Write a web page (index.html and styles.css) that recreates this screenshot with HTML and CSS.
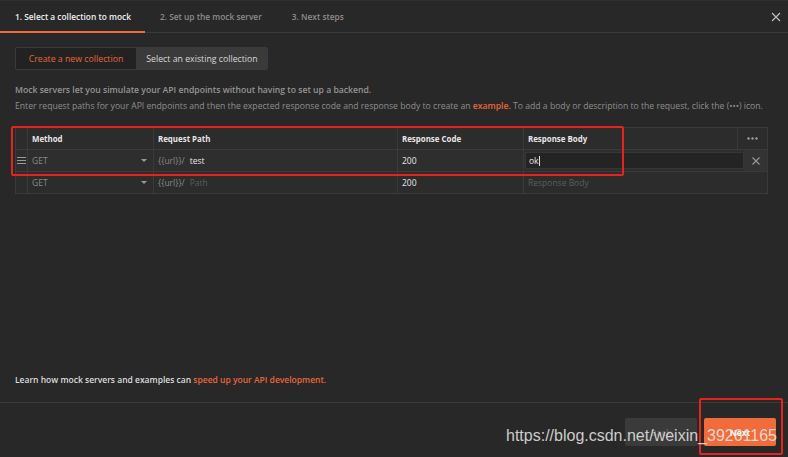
FILE: index.html
```html
<!DOCTYPE html>
<html>
<head>
<meta charset="utf-8">
<link rel="stylesheet" href="styles.css">
</head>
<body>
<div class="modal">
  <div class="tabs">
    <div class="tab active">1. Select a collection to mock</div>
    <div class="tab">2. Set up the mock server</div>
    <div class="tab">3. Next steps</div>
    <div class="close">
      <svg width="10" height="10" viewBox="0 0 10 10"><path d="M1 1L9 9M9 1L1 9" stroke="#bdbdbd" stroke-width="1.2" fill="none"/></svg>
    </div>
  </div>
  <div class="content">
    <div class="top">
      <div class="segmented">
        <div class="seg seg-active">Create a new collection</div>
        <div class="seg">Select an existing collection</div>
      </div>
      <div class="desc">
        <p>Mock servers let you simulate your API endpoints without having to set up a backend.</p>
        <p>Enter request paths for your API endpoints and then the expected response code and response body to create an <span class="link">example.</span> To add a body or description to the request, click the (•••) icon.</p>
      </div>
      <div class="table">
        <div class="row head">
          <div class="cell c-handle"></div>
          <div class="cell c-method">Method</div>
          <div class="cell c-path">Request Path</div>
          <div class="cell c-code">Response Code</div>
          <div class="cell c-body">Response Body</div>
          <div class="cell c-more">
            <svg width="11" height="3" viewBox="0 0 11 3"><circle cx="1.5" cy="1.5" r="1.2" fill="#a0a0a0"/><circle cx="5.5" cy="1.5" r="1.2" fill="#a0a0a0"/><circle cx="9.5" cy="1.5" r="1.2" fill="#a0a0a0"/></svg>
          </div>
        </div>
        <div class="row r1">
          <div class="cell c-handle">
            <svg width="9" height="7" viewBox="0 0 9 7"><path d="M0 0.5H9M0 3.5H9M0 6.5H9" stroke="#9a9a9a" stroke-width="1"/></svg>
          </div>
          <div class="cell c-method"><span class="muted">GET</span><span class="caret"></span></div>
          <div class="cell c-path"><span class="muted">{{url}}/</span><span class="val">test</span></div>
          <div class="cell c-code"><span class="val">200</span></div>
          <div class="cell c-body-input"><div class="input"><span class="val">ok</span><span class="cursor"></span></div></div>
          <div class="cell c-del">
            <svg width="8" height="8" viewBox="0 0 8 8"><path d="M0.5 0.5L7.5 7.5M7.5 0.5L0.5 7.5" stroke="#9a9a9a" stroke-width="1.1" fill="none"/></svg>
          </div>
        </div>
        <div class="row r2">
          <div class="cell c-handle"></div>
          <div class="cell c-method"><span class="muted">GET</span><span class="caret"></span></div>
          <div class="cell c-path"><span class="muted">{{url}}/</span><span class="ph">Path</span></div>
          <div class="cell c-code"><span class="val">200</span></div>
          <div class="cell c-body-wide"><span class="ph">Response Body</span></div>
        </div>
      </div>
    </div>
    <div class="learn">Learn how mock servers and examples can <span class="link">speed up your API development.</span></div>
  </div>
  <div class="footer">
    <button class="btn back">Back</button>
    <button class="btn next">Next</button>
  </div>
</div>
<div class="hl hl-table"></div>
<div class="hl hl-next"></div>
<div class="watermark">https://blog.csdn.net/weixin_39261165</div>
</body>
</html>
```
FILE: styles.css
```css
html, body {
  margin: 0;
  padding: 0;
  background: #282828;
  width: 788px;
  height: 457px;
  overflow: hidden;
}
body {
  font-family: "Open Sans", "Liberation Sans", sans-serif;
  font-size: 8.5px;
  color: #9a9a9a;
  position: relative;
}
.modal {
  display: flex;
  flex-direction: column;
  height: 457px;
}
.tabs {
  display: flex;
  align-items: stretch;
  border-bottom: 1px solid #3a3a3a;
  border-top: 1px solid #2f2f2f;
  box-sizing: border-box;
  height: 33px;
}
.tab {
  display: flex;
  align-items: center;
  padding: 0 15px;
  color: #8c8c8c;
  font-size: 8.35px;
  font-weight: 600;
  border-bottom: 2px solid transparent;
  margin-bottom: -1px;
}
.tab.active {
  color: #f0f0f0;
  border-bottom-color: #f26b3a;
  padding-right: 14px;
}
.close {
  margin-left: auto;
  display: flex;
  align-items: center;
  padding-right: 7px;
}
.content {
  height: 370px;
  padding: 14px 15px 0 15px;
  box-sizing: border-box;
  display: flex;
  flex-direction: column;
  justify-content: space-between;
  border-bottom: 1px solid #3a3a3a;
}
.segmented {
  display: flex;
  height: 23px;
  width: 253px;
  border: 1px solid #3a3a3a;
  border-radius: 2px;
  box-sizing: border-box;
  overflow: hidden;
}
.seg {
  display: flex;
  align-items: center;
  justify-content: center;
  font-size: 8.75px;
  color: #d8d8d8;
  background: #3a3a3a;
  flex: 0 0 132px;
}
.seg-active {
  background: #222222;
  color: #e8663a;
  flex: 0 0 120px;
}
.desc {
  margin-top: 12px;
  color: #8e8e8e;
  font-size: 8.65px;
}
.desc p {
  margin: 0;
  line-height: 16px;
}
.desc p:first-child {
  font-weight: 600;
  color: #959595;
}
.link {
  color: #e8663a;
  font-weight: 600;
}
.table {
  margin-top: 13px;
  width: 751px;
  border: 1px solid #3a3a3a;
  background: #2c2c2c;
}
.row {
  display: flex;
  height: 22px;
  border-top: 1px solid #3a3a3a;
  box-sizing: border-box;
}
.row.head {
  border-top: none;
  height: 21px;
  font-weight: 700;
  font-size: 7.9px;
  color: #e6e6e6;
}
.row.r1 {
  background: #2e2e2e;
}
.cell {
  display: flex;
  align-items: center;
  padding-left: 4px;
  box-sizing: border-box;
  border-left: 1px solid #3a3a3a;
}
.cell:first-child {
  border-left: none;
}
.c-handle {
  flex: 0 0 11px;
  justify-content: center;
  padding: 0;
}
.c-method {
  flex: 0 0 126px;
  padding-right: 6px;
}
.c-path {
  flex: 0 0 244px;
}
.c-code {
  flex: 0 0 126px;
}
.c-body {
  flex: 0 0 214px;
}
.c-more {
  flex: 1;
  justify-content: center;
  padding: 0;
}
.c-body-input {
  flex: 0 0 221px;
  padding: 2px 0 2px 1px;
}
.input {
  flex: 1;
  height: 100%;
  background: #242424;
  border: 1px solid #363636;
  box-sizing: border-box;
  display: flex;
  align-items: center;
  padding-left: 3px;
}
.cursor {
  display: inline-block;
  width: 1px;
  height: 10px;
  background: #e0e0e0;
}
.c-del {
  flex: 1;
  justify-content: center;
  padding: 0;
  background: #333333;
  border-left: none;
}
.c-body-wide {
  flex: 1;
}
.muted {
  color: #8a8a8a;
}
.val {
  color: #e6e6e6;
}
.c-path .val, .c-path .ph {
  margin-left: 5px;
}
.ph {
  color: #5c5c5c;
}
.caret {
  margin-left: auto;
  width: 0;
  height: 0;
  border-left: 3px solid transparent;
  border-right: 3px solid transparent;
  border-top: 3px solid #9a9a9a;
}
.learn {
  color: #dcdcdc;
  font-weight: 600;
  padding-bottom: 17px;
}
.footer {
  display: flex;
  justify-content: flex-end;
  gap: 7px;
  padding: 15px 12px 0 0;
}
.btn {
  height: 28px;
  width: 72px;
  border: none;
  border-radius: 2px;
  font-family: "Open Sans", "Liberation Sans", sans-serif;
  font-size: 8.5px;
  font-weight: 700;
}
.back {
  background: #3a3a3a;
  color: #5e5e5e;
}
.next {
  background: #f26b3a;
  color: #ffffff;
}
.hl {
  position: absolute;
  border: 2px solid #e8231c;
  box-sizing: border-box;
  border-radius: 2px;
}
.hl-table {
  left: 11px;
  top: 126px;
  width: 613px;
  height: 50px;
}
.hl-next {
  left: 699px;
  top: 398px;
  width: 84px;
  height: 57px;
}
.watermark {
  position: absolute;
  left: 506px;
  top: 427px;
  font-family: "Liberation Sans", Arial, sans-serif;
  font-size: 16px;
  color: rgba(235, 235, 235, 0.85);
  white-space: nowrap;
}
```
